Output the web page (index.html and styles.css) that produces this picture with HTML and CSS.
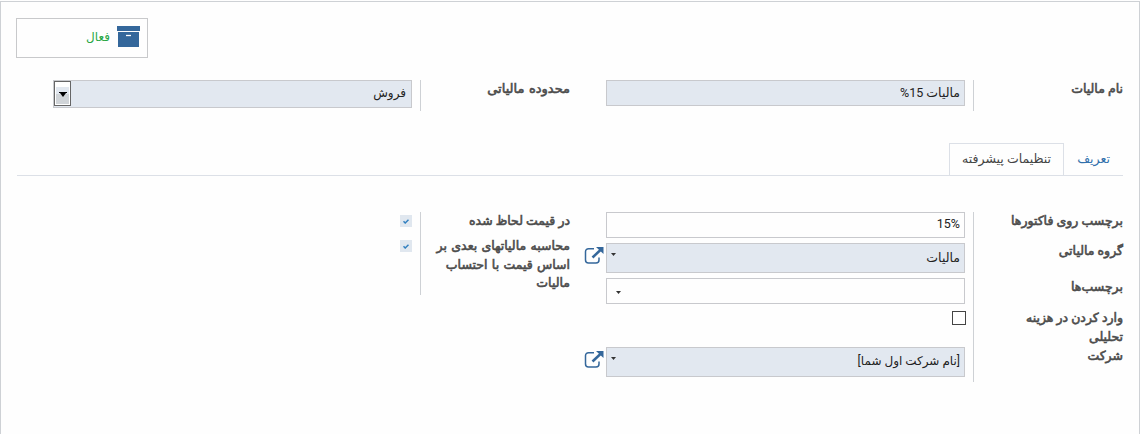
FILE: index.html
```html
<!DOCTYPE html>
<html lang="fa" dir="rtl">
<head>
<meta charset="utf-8">
<title>مالیات</title>
<link rel="stylesheet" href="styles.css">
</head>
<body>
<main class="sheet">
  <div class="button-box">
    <button class="stat-button">
      <svg class="archive" viewBox="0 0 23 21"><path d="M0 0h23v5H0zM1 6h21v15H1z" fill="#34679b"/><path d="M9 9.500h5" stroke="#fff" stroke-width="1.300"/></svg>
      <span class="status">فعال</span>
    </button>
  </div>
  <div class="columns head">
    <section class="group">
      <div class="row row-head"><label class="label">نام مالیات</label><div class="cell"><div class="input required">مالیات 15%</div></div></div>
    </section>
    <section class="group">
      <div class="row row-head"><label class="label wide">محدوده مالیاتی</label><div class="cell"><div class="input required select"><span>فروش</span><i class="drop"><svg viewBox="0 0 8 5"><path d="M0 0h8v1H7L4 5 1 1H0z"/></svg></i></div></div></div>
    </section>
  </div>
  <nav class="tabs">
    <a class="tab link">تعریف</a>
    <a class="tab active">تنظیمات پیشرفته</a>
  </nav>
  <div class="columns">
    <section class="group">
      <div class="row row-a"><label class="label">برچسب روی فاکتورها</label><div class="cell"><div class="input" dir="ltr">15%</div></div></div>
      <div class="row row-b"><label class="label">گروه مالیاتی</label><div class="cell linked"><div class="input required many"><span>مالیات</span><i class="caret"></i></div><svg class="external" viewBox="0 0 20 17"><path d="M10 1.700H4.500a3 3 0 0 0-3 3V13a3 3 0 0 0 3 3H12a3 3 0 0 0 3-3v-2.500" fill="none" stroke="#34679b" stroke-width="1.500"/><path d="M8.500 10.500 17 2.500" stroke="#34679b" stroke-width="2.500"/><path d="M12 0h7.500v7z" fill="#34679b"/></svg></div></div>
      <div class="row row-c"><label class="label">برچسب‌ها</label><div class="cell"><div class="input tags"><i class="caret"></i></div></div></div>
      <div class="row row-d"><label class="label">وارد کردن در هزینه<br>تحلیلی</label><div class="cell"><span class="checkbox"></span></div></div>
      <div class="row row-e"><label class="label">شرکت</label><div class="cell linked"><div class="input required many"><span class="company">[نام شرکت اول شما]</span><i class="caret"></i></div><svg class="external" viewBox="0 0 20 17"><path d="M10 1.700H4.500a3 3 0 0 0-3 3V13a3 3 0 0 0 3 3H12a3 3 0 0 0 3-3v-2.500" fill="none" stroke="#34679b" stroke-width="1.500"/><path d="M8.500 10.500 17 2.500" stroke="#34679b" stroke-width="2.500"/><path d="M12 0h7.500v7z" fill="#34679b"/></svg></div></div>
    </section>
    <section class="group">
      <div class="row row-f"><label class="label">در قیمت لحاظ شده</label><div class="cell"><span class="checked"><svg viewBox="0 0 6 5"><path d="M.5 2.300 2.200 4 5.500.8" fill="none" stroke="#3280c0" stroke-width="1.500"/></svg></span></div></div>
      <div class="row row-g"><label class="label wide">محاسبه مالیاتهای بعدی بر<br>اساس قیمت با احتساب<br>مالیات</label><div class="cell"><span class="checked"><svg viewBox="0 0 6 5"><path d="M.5 2.300 2.200 4 5.500.8" fill="none" stroke="#3280c0" stroke-width="1.500"/></svg></span></div></div>
    </section>
  </div>
</main>
</body>
</html>
```
FILE: styles.css
```css
* { box-sizing: border-box; }
body { margin: 0; overflow: hidden; background: #fefefe; color: #222; font: 12.5px/19px Roboto, "DejaVu Sans", sans-serif; }
.sheet { height: 440px; margin-top: 1px; padding: 16px; border: 1px solid #ced1d5; }
.button-box { display: flex; justify-content: flex-end; height: 62px; margin-left: -1px; }
.stat-button { display: flex; align-items: flex-start; gap: 7px; width: 132px; height: 40px; padding: 7px; border: 1px solid #c8c9cb; background: #fefefe; color: #28a745; font: inherit; font-size: 12px; }
.status { padding-top: 2px; }
.archive { width: 23px; height: 21px; }
.columns { display: grid; grid-template-columns: 517px 517px; gap: 36px; align-items: start; }
.head { height: 63px; }
.row { display: grid; grid-template-columns: 150px 359px; gap: 8px; }
.label { border-left: 1px solid #ced1d5; color: #4c4c4c; -webkit-text-stroke: 0.6px #4c4c4c; line-height: 18.5px; white-space: nowrap; }
.wide { word-spacing: 1.2px; }
.row-head .label { line-height: 17px; }
.row-head .wide { font-size: 13px; }
.input { display: flex; justify-content: flex-start; height: 26px; padding: 2px 4px; border: 1px solid #c8c9cd; background: #fefefe; white-space: nowrap; }
.input[dir="ltr"] { justify-content: flex-end; }
.row-a .input { padding-top: 1px; }
.required { background: #e2e8f0; }
.row-head { height: 31px; }
.select { height: 28px; justify-content: space-between; padding: 3px 5px 1px 0; font-size: 12px; }
.drop { display: flex; align-items: center; justify-content: center; width: 17px; height: 25px; margin-top: -3px; border: 1px solid #666; background: linear-gradient(#fff 0 5px, #e2e8f0 5px 50%, #d0d4d8 50%); box-shadow: inset 0 0 0 1px #fff; }
.drop svg { width: 8px; height: 5px; margin-top: 2px; }
.tabs { display: flex; height: 33px; margin-bottom: 36px; border-bottom: 1px solid #dce0e7; }
.tab { height: 32px; padding: 5px 12px; border: 1px solid transparent; border-bottom: 0; white-space: nowrap; color: #444; }
.link { width: 59px; color: #3270ac; }
.active { width: 115px; height: 32px; border-color: #dce0e7; background: #fefefe; }
.row-a { height: 30px; }
.row-b { height: 36px; }
.row-c { height: 31px; }
.row-d { height: 38px; }
.row-e { height: 35px; }
.row-f { height: 25px; }
.row-g { height: 58px; }
.linked { display: flex; width: 381px; gap: 2px; }
.many { width: 359px; height: 30px; justify-content: space-between; padding: 4px 4px; }
.row-b .many { margin-top: 1px; }
.company { font-size: 12px; }
.external { flex: none; width: 20px; height: 17px; margin-top: 4px; }
.row-b .external { margin-top: 5px; }
.caret { width: 5px; height: 3px; margin-top: 5px; background: #333; clip-path: polygon(0 0, 100% 0, 50% 100%); }
.tags { justify-content: flex-end; padding-left: 9px; padding-top: 7px; }
.checkbox { display: block; width: 14px; height: 14px; margin: 2px -1px 0 0; border: 1px solid #444; background: #fff; }
.checked { display: flex; align-items: center; justify-content: center; width: 12px; height: 12px; margin-top: 3px; background: #e0e7ef; }
.checked svg { width: 6px; height: 5px; }
```
